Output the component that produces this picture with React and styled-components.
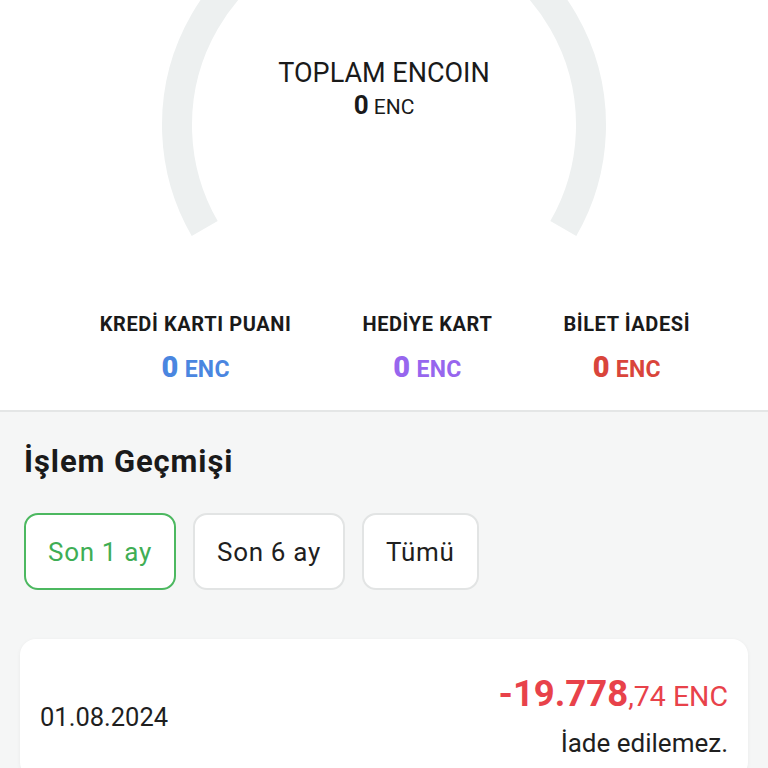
import React, { useState } from 'react'
import styled, { createGlobalStyle } from 'styled-components'

const GlobalStyle = createGlobalStyle`
    html, body {
        margin: 0;
        padding: 0;
        background: #f5f6f6;
        font-family: Roboto, "Noto Sans", Arial, sans-serif;
        color: #1c1c1c;
    }
    * { box-sizing: border-box; }
`;

const stats = [
    { label: 'KREDİ KARTI PUANI', value: 0, color: '#4a86e0' },
    { label: 'HEDİYE KART', value: 0, color: '#9766ee' },
    { label: 'BİLET İADESİ', value: 0, color: '#d9453b' },
];

const filters = ['Son 1 ay', 'Son 6 ay', 'Tümü'];

function App() {
    const [filter, setFilter] = useState(0);

    return (
        <Page>
            <GlobalStyle />
            <Summary>
                <Gauge>
                    <GaugeArc viewBox="0 0 768 270" width="768" height="270">
                        <path
                            d="M 204.7 228.5 A 207 207 0 1 1 563.3 228.5"
                            fill="none"
                            stroke="#edf0f0"
                            strokeWidth="30"
                        />
                    </GaugeArc>
                    <GaugeTitle>TOPLAM ENCOIN</GaugeTitle>
                    <GaugeValue><b>0</b> ENC</GaugeValue>
                </Gauge>
                <Stats>
                    {stats.map((s) => (
                        <Stat key={s.label}>
                            <StatLabel>{s.label}</StatLabel>
                            <StatValue color={s.color}><b>{s.value}</b> ENC</StatValue>
                        </Stat>
                    ))}
                </Stats>
            </Summary>

            <History>
                <Heading>İşlem Geçmişi</Heading>
                <Filters>
                    {filters.map((f, i) => (
                        <FilterButton key={f} active={i === filter} onClick={() => setFilter(i)}>
                            {f}
                        </FilterButton>
                    ))}
                </Filters>
                <Card>
                    <CardDate>01.08.2024</CardDate>
                    <CardRight>
                        <Amount><b>-19.778</b>,74 ENC</Amount>
                        <Note>İade edilemez.</Note>
                    </CardRight>
                </Card>
            </History>
        </Page>
    )
}

export default App

const Page = styled.div`
    width: 768px;
    min-height: 768px;
    overflow: hidden;
`;

const Summary = styled.div`
    background: #ffffff;
    border-bottom: 2px solid #e4e6e6;
    height: 412px;
    display: flex;
    flex-direction: column;
`;

const Gauge = styled.div`
    position: relative;
    height: 270px;
    display: flex;
    flex-direction: column;
    align-items: center;
    padding-top: 57px;
`;

const GaugeArc = styled.svg`
    position: absolute;
    top: 0;
    left: 0;
`;

const GaugeTitle = styled.div`
    position: relative;
    font-size: 27px;
    line-height: 33px;
    color: #1a1a1a;
`;

const GaugeValue = styled.div`
    position: relative;
    font-size: 21px;
    line-height: 31px;
    color: #1a1a1a;
    b {
        font-size: 26px;
        font-weight: 700;
    }
`;

const Stats = styled.div`
    display: flex;
    justify-content: center;
    gap: 71px;
    padding: 41px 0 0 22px;
`;

const Stat = styled.div`
    display: flex;
    flex-direction: column;
    align-items: center;
`;

const StatLabel = styled.div`
    font-size: 20px;
    font-weight: 700;
    line-height: 26px;
    color: #1a1a1a;
    letter-spacing: 0.6px;
`;

const StatValue = styled.div`
    margin-top: 12px;
    font-size: 23px;
    font-weight: 700;
    line-height: 36px;
    color: ${(props) => props.color};
    letter-spacing: 0.3px;
    b {
        font-size: 29px;
    }
`;

const History = styled.div`
    padding: 30px 20px 0 24px;
`;

const Heading = styled.h2`
    margin: 0;
    font-size: 31px;
    font-weight: 700;
    line-height: 40px;
    letter-spacing: 0.9px;
    color: #1a1a1a;
`;

const Filters = styled.div`
    display: flex;
    gap: 17px;
    margin-top: 31px;
`;

const FilterButton = styled.button`
    height: 77px;
    padding: 0 22px;
    border-radius: 14px;
    background: #ffffff;
    border: 2px solid ${(props) => props.active ? '#4cb860' : '#e2e4e4'};
    color: ${(props) => props.active ? '#3fae55' : '#1f1f1f'};
    font-family: Roboto, "Noto Sans", Arial, sans-serif;
    font-size: 26px;
    letter-spacing: 0.7px;
    cursor: pointer;
`;

const Card = styled.div`
    margin: 49px 0 0 -4px;
    background: #ffffff;
    border-radius: 16px;
    box-shadow: 0 1px 4px rgba(0, 0, 0, 0.05);
    padding: 34px 20px 20px 20px;
    display: flex;
    justify-content: space-between;
    align-items: center;
`;

const CardDate = styled.div`
    font-size: 25.5px;
    margin-top: 2px;
    color: #1f1f1f;
`;

const CardRight = styled.div`
    display: flex;
    flex-direction: column;
    align-items: flex-end;
`;

const Amount = styled.div`
    font-size: 28.5px;
    line-height: 42px;
    color: #e8424a;
    b {
        font-size: 36.5px;
        font-weight: 700;
    }
`;

const Note = styled.div`
    margin-top: 10px;
    font-size: 26px;
    color: #1f1f1f;
`;
